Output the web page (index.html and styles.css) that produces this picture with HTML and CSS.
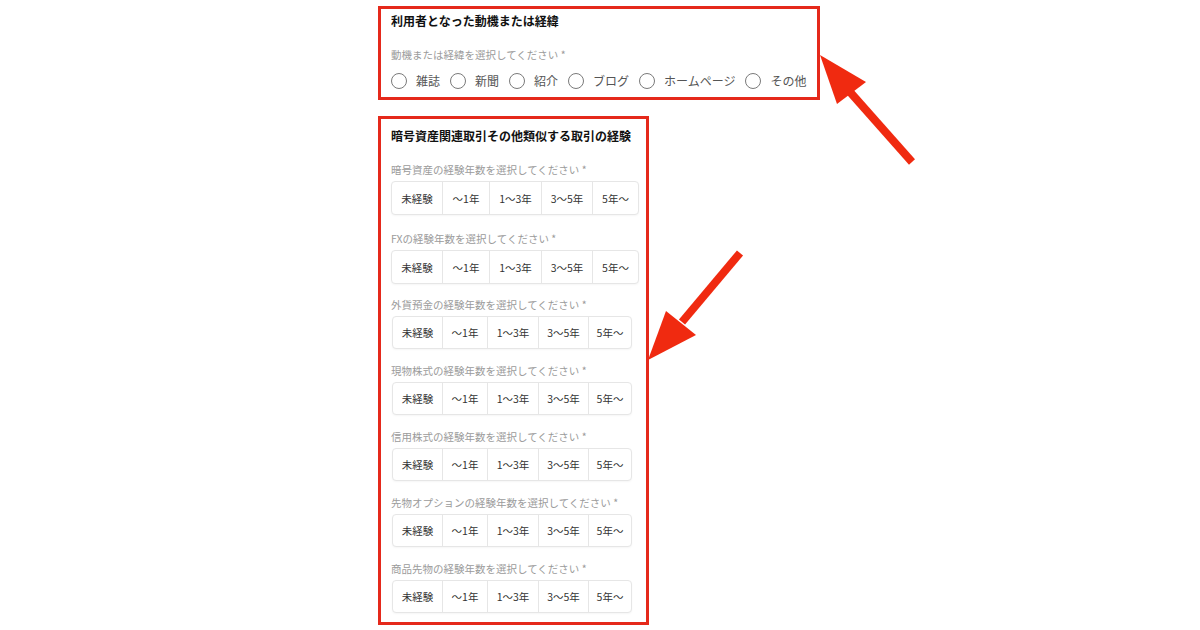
FILE: index.html
```html
<!DOCTYPE html>
<html lang="ja">
<head>
<meta charset="utf-8">
<title>経験フォーム</title>
<link rel="stylesheet" href="styles.css">
</head>
<body>
<div class="page">
  <div class="column">
    <section class="box box-motive">
      <h2 class="box-title">利用者となった動機または経緯</h2>
      <p class="field-label">動機または経緯を選択してください *</p>
      <div class="radio-row">
        <label class="radio"><span class="circle"></span>雑誌</label>
        <label class="radio"><span class="circle"></span>新聞</label>
        <label class="radio"><span class="circle"></span>紹介</label>
        <label class="radio"><span class="circle"></span>ブログ</label>
        <label class="radio"><span class="circle"></span>ホームページ</label>
        <label class="radio"><span class="circle"></span>その他</label>
      </div>
    </section>

    <section class="box box-exp">
      <h2 class="box-title title-exp">暗号資産関連取引その他類似する取引の経験</h2>

      <div class="sec sec-a">
        <p class="field-label">暗号資産の経験年数を選択してください *</p>
        <div class="seg wide"><span class="cell c1">未経験</span><span class="cell c2">〜1年</span><span class="cell c3">1〜3年</span><span class="cell c4">3〜5年</span><span class="cell c5">5年〜</span></div>
      </div>
      <div class="sec sec-b">
        <p class="field-label">FXの経験年数を選択してください *</p>
        <div class="seg wide"><span class="cell c1">未経験</span><span class="cell c2">〜1年</span><span class="cell c3">1〜3年</span><span class="cell c4">3〜5年</span><span class="cell c5">5年〜</span></div>
      </div>
      <div class="sec">
        <p class="field-label">外貨預金の経験年数を選択してください *</p>
        <div class="seg narrow"><span class="cell c1">未経験</span><span class="cell c2">〜1年</span><span class="cell c3">1〜3年</span><span class="cell c4">3〜5年</span><span class="cell c5">5年〜</span></div>
      </div>
      <div class="sec">
        <p class="field-label">現物株式の経験年数を選択してください *</p>
        <div class="seg narrow"><span class="cell c1">未経験</span><span class="cell c2">〜1年</span><span class="cell c3">1〜3年</span><span class="cell c4">3〜5年</span><span class="cell c5">5年〜</span></div>
      </div>
      <div class="sec">
        <p class="field-label">信用株式の経験年数を選択してください *</p>
        <div class="seg narrow"><span class="cell c1">未経験</span><span class="cell c2">〜1年</span><span class="cell c3">1〜3年</span><span class="cell c4">3〜5年</span><span class="cell c5">5年〜</span></div>
      </div>
      <div class="sec">
        <p class="field-label">先物オプションの経験年数を選択してください *</p>
        <div class="seg narrow"><span class="cell c1">未経験</span><span class="cell c2">〜1年</span><span class="cell c3">1〜3年</span><span class="cell c4">3〜5年</span><span class="cell c5">5年〜</span></div>
      </div>
      <div class="sec sec-last">
        <p class="field-label">商品先物の経験年数を選択してください *</p>
        <div class="seg narrow"><span class="cell c1">未経験</span><span class="cell c2">〜1年</span><span class="cell c3">1〜3年</span><span class="cell c4">3〜5年</span><span class="cell c5">5年〜</span></div>
      </div>
    </section>
  </div>

  <svg class="arrows" width="1200" height="630" viewBox="0 0 1200 630" aria-hidden="true">
    <line x1="850" y1="92" x2="912" y2="162" class="shaft"/>
    <polygon points="820,55 837,104 866,82" class="head"/>
    <line x1="682" y1="322" x2="740" y2="253" class="shaft"/>
    <polygon points="648,360 666,311 696,335" class="head"/>
  </svg>
</div>
</body>
</html>
```

FILE: styles.css
```css
* { box-sizing: border-box; }

html, body {
  margin: 0;
  padding: 0;
  background: #ffffff;
}

body {
  font-family: "Noto Sans CJK JP", "Noto Sans", "Liberation Sans", sans-serif;
  color: #222;
}

.page {
  position: relative;
  width: 1200px;
  height: 630px;
  overflow: hidden;
}

.column {
  display: flex;
  flex-direction: column;
  align-items: flex-start;
  padding: 6px 0 0 378px;
  gap: 16px;
}

.box {
  border: 3px solid #e5291b;
  background: #fff;
}

.box-motive {
  width: 442px;
  height: 94px;
  padding: 4px 10px 0 10px;
}

.box-exp {
  width: 271px;
  height: 509px;
  padding: 9px 10px 0 10px;
}

.box-title {
  margin: 0;
  font-size: 12px;
  line-height: 16px;
  font-weight: 700;
  color: #111;
}

.field-label {
  margin: 0;
  font-size: 10.5px;
  line-height: 14px;
  color: #9b9b9b;
  white-space: nowrap;
}

.box-motive .field-label {
  margin-top: 19px;
}

.radio-row {
  display: flex;
  align-items: center;
  gap: 10px;
  margin-top: 10px;
  height: 18px;
}

.radio {
  display: flex;
  align-items: center;
  font-size: 12px;
  line-height: 18px;
  color: #555;
  white-space: nowrap;
}

.circle {
  width: 16px;
  height: 16px;
  border: 1.5px solid #7a7a7a;
  border-radius: 50%;
  margin-right: 9px;
  background: #fff;
  flex: none;
}

.title-exp {
  margin-bottom: 19px;
}

.sec {
  display: flex;
  flex-direction: column;
  gap: 4px;
  margin-bottom: 15px;
}

.sec-a { margin-bottom: 17px; }
.sec-b { margin-bottom: 14px; }
.sec-last { margin-bottom: 0; }

.seg {
  display: flex;
  border: 1px solid #e6e6e6;
  border-radius: 4px;
  box-shadow: 0 1px 2px rgba(0, 0, 0, 0.04);
  background: #fff;
  align-self: flex-start;
}

.seg.wide { height: 34px; }
.seg.narrow { height: 33px; margin-left: 1px; }

.cell {
  display: flex;
  align-items: center;
  justify-content: center;
  font-size: 10.5px;
  color: #333;
  white-space: nowrap;
  border-left: 1px solid #e6e6e6;
}

.cell.c1 { border-left: none; }

.wide .c1 { width: 50px; }
.wide .c2 { width: 47px; }
.wide .c3 { width: 52px; }
.wide .c4 { width: 51px; }
.wide .c5 { width: 46px; }

.narrow .c1 { width: 49px; }
.narrow .c2 { width: 45px; }
.narrow .c3 { width: 51px; }
.narrow .c4 { width: 50px; }
.narrow .c5 { width: 43px; }

.arrows {
  position: absolute;
  left: 0;
  top: 0;
  pointer-events: none;
}

.arrows .shaft {
  stroke: #f02a10;
  stroke-width: 8;
}

.arrows .head {
  fill: #f02a10;
}
```
